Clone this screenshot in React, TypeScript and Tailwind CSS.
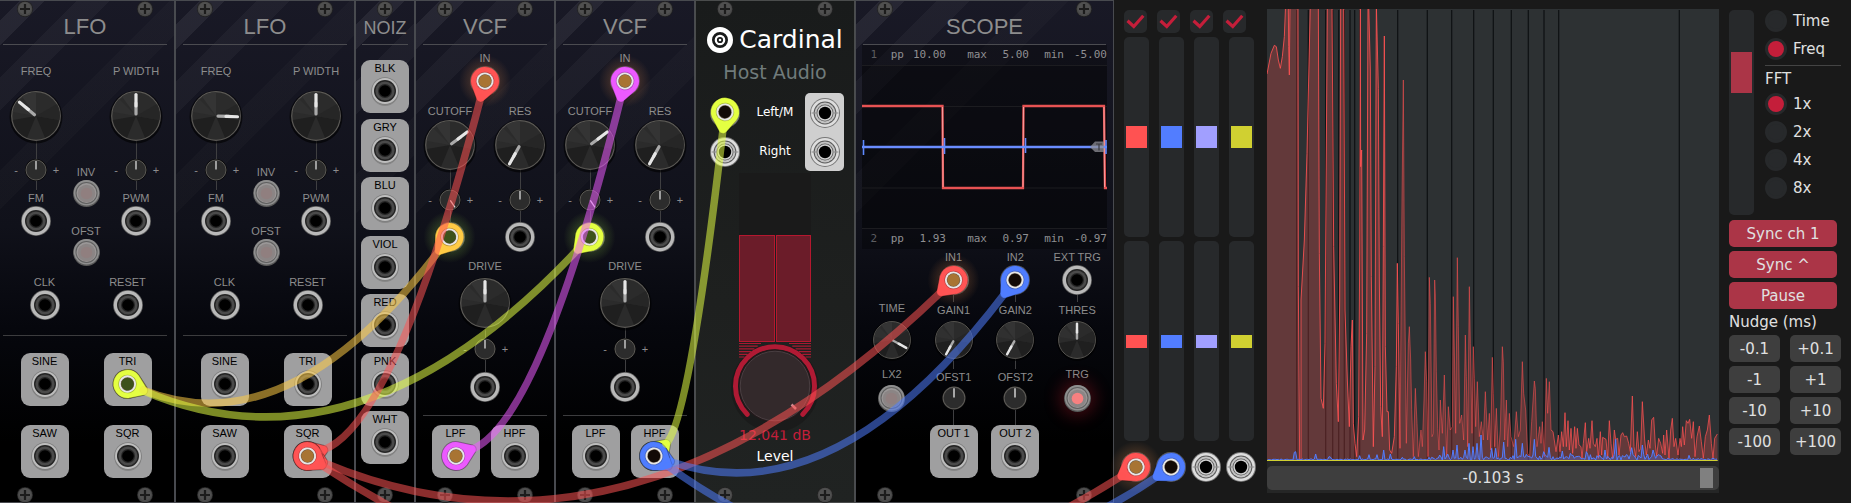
import React from "react";

const PANEL_FONT = "font-['Liberation_Sans',Arial,sans-serif]";
const UI_FONT = "font-['DejaVu_Sans',Verdana,sans-serif]";

function Screw() {
  return (
    <svg className="size-4 shrink-0" viewBox="0 0 16 16" aria-hidden="true">
      <circle cx="8" cy="8" r="8" fill="#222222" />
      <circle cx="8" cy="8" r="7.3" fill="#484848" />
      <circle cx="8" cy="7.4" r="6.2" fill="#505050" />
      <path d="M6.9 3h2.2v3.9H13v2.2H9.1V13H6.9V9.1H3V6.9h3.9z" fill="#1c1c1c" />
    </svg>
  );
}

function Screws({ single = false }: { single?: boolean }) {
  return (
    <div className={single ? "flex justify-center" : "flex justify-between px-[22px]"}>
      <Screw />
      {!single && <Screw />}
    </div>
  );
}

function Module({
  title,
  width,
  single = false,
  children,
}: {
  title: string;
  width: string;
  single?: boolean;
  children: React.ReactNode;
}) {
  return (
    <section
      className={`${PANEL_FONT} ${width} flex shrink-0 flex-col bg-[linear-gradient(135deg,transparent_18px,#ffffff10_18px,#ffffff10_36px,transparent_36px,transparent_58px,#ffffff09_58px,#ffffff09_82px,transparent_82px,transparent_124px,#ffffff05_124px,#ffffff05_152px,transparent_152px),linear-gradient(to_bottom,#191926,#10111a_45%,#06070d_65%,#000000_88%)] pt-px text-[#8d8d8d] shadow-[inset_0_0_0_1px_#484a4f]`}
    >
      <Screws single={single} />
      <h2
        className={
          single
            ? "text-center text-[18px] leading-[23px]"
            : "text-center text-[22px] leading-5"
        }
      >
        {title}
      </h2>
      <div className={single ? "mx-[7px] mt-1 h-px bg-[#4b4b50]" : "mx-2 mt-[7px] h-px bg-[#4b4b50]"} />
      {children}
      <div className="mt-auto pt-[9px]">
        <Screws single={single} />
      </div>
    </section>
  );
}

function Label({ children, dark = false }: { children: React.ReactNode; dark?: boolean }) {
  return (
    <span className={`text-[11px] leading-4 whitespace-nowrap ${dark ? "text-black" : ""}`}>{children}</span>
  );
}

function Port() {
  return (
    <svg className="block size-[30px] shrink-0" viewBox="0 0 30 30" aria-hidden="true">
      <circle cx="15" cy="15" r="15" fill="#5c5c5c" />
      <circle cx="15" cy="15" r="14.2" fill="#b9b9b9" />
      <circle cx="15" cy="15" r="11" fill="#242424" />
      <circle cx="15" cy="15" r="9.6" fill="#4a4a4a" />
      <circle cx="15" cy="15" r="7" fill="#262626" />
      <circle cx="15" cy="15" r="5.8" fill="#000000" />
    </svg>
  );
}

function OutPort() {
  return (
    <svg className="block size-[30px] shrink-0" viewBox="0 0 30 30" aria-hidden="true">
      <circle cx="15" cy="16.5" r="13.5" fill="#868686" />
      <circle cx="15" cy="15" r="13.8" fill="#7d7d7d" />
      <circle cx="15" cy="15" r="13" fill="#bdbdbd" />
      <circle cx="15" cy="15" r="11" fill="#242424" />
      <circle cx="15" cy="15" r="9.6" fill="#4a4a4a" />
      <circle cx="15" cy="15" r="7" fill="#262626" />
      <circle cx="15" cy="15" r="5.8" fill="#000000" />
    </svg>
  );
}

function SilverPort() {
  return (
    <svg className="block size-[30px] shrink-0" viewBox="0 0 30 30" aria-hidden="true">
      <circle cx="15" cy="15" r="15" fill="#777777" />
      <circle cx="15" cy="15" r="14" fill="#dedede" />
      <circle cx="15" cy="15" r="11.4" fill="#5a5a5a" />
      <circle cx="15" cy="15" r="10.4" fill="#c4c4c4" />
      <path d="M1.5 15H6M24 15h4.5" stroke="#8a8a8a" strokeWidth="1" />
      <circle cx="15" cy="15" r="8.5" fill="#555555" />
      <circle cx="15" cy="15" r="7.7" fill="#d0d0d0" />
      <circle cx="15" cy="15" r="6.2" fill="#000000" />
    </svg>
  );
}

function Output({ name }: { name: string }) {
  return (
    <div className="flex h-[53px] w-12 flex-col items-center rounded-[9px] bg-[#9f9fa0]">
      <Label dark>{name}</Label>
      <OutPort />
    </div>
  );
}

function Knob({ name, angle, size = "size-[50px]" }: { name: string; angle: number; size?: string }) {
  return (
    <label className={`relative block shrink-0 ${size}`}>
      <input
        type="range"
        aria-label={name}
        min={-180}
        max={180}
        defaultValue={angle}
        className="absolute inset-0 m-0 size-full opacity-0"
      />
      <svg className="block size-full overflow-visible" viewBox="0 0 50 50" aria-hidden="true">
        <circle cx="25" cy="26" r="26.5" fill="#000000" opacity="0.6" />
        <circle cx="25" cy="25" r="24.3" fill="#2b2b2b" stroke="#5b5955" strokeWidth="1.2" />
        <path d="M25 25L11 5.5A24 24 0 0 1 25 1.2z" fill="#343434" />
        <path d="M25 25L1.8 21A24 24 0 0 1 8 8z" fill="#303030" />
        <path d="M25 25L2 29A23.5 23.5 0 0 0 16 46.8z" fill="#1f1f1f" />
        <path d="M25 25L48 29A23.5 23.5 0 0 1 34 46.8z" fill="#1f1f1f" />
        <path d="M25 25L46 13A24 24 0 0 1 48.5 29z" fill="#262626" />
        <g transform={`rotate(${angle} 25 25)`}>
          <path d="M25 23V12" stroke="#a9a9a9" strokeWidth="3.2" strokeLinecap="round" />
          <path d="M25 15V3.5" stroke="#e6e6e6" strokeWidth="3.2" strokeLinecap="round" />
        </g>
      </svg>
    </label>
  );
}

function TrimKnob({ name, angle = 0, size = "size-[22px]" }: { name: string; angle?: number; size?: string }) {
  return (
    <label className={`relative block shrink-0 ${size}`}>
      <input
        type="range"
        aria-label={name}
        min={-180}
        max={180}
        defaultValue={angle}
        className="absolute inset-0 m-0 size-full opacity-0"
      />
      <svg className="block size-full" viewBox="0 0 22 22" aria-hidden="true">
        <circle cx="11" cy="11" r="11" fill="#0a0a0a" />
        <circle cx="11" cy="11" r="10" fill="#2c2c2c" stroke="#5b5955" strokeWidth="1" />
        <path d="M11 10.5V2" stroke="#dcdcdc" strokeWidth="1.3" transform={`rotate(${angle} 11 11)`} />
      </svg>
    </label>
  );
}

function Attenuverter({ name, angle = 0 }: { name: string; angle?: number }) {
  return (
    <div className="flex items-center text-[11px] leading-4">
      <span className="w-3.5 pr-1 text-center">-</span>
      <TrimKnob name={name} angle={angle} />
      <span className="w-3.5 pl-1 text-center">+</span>
    </div>
  );
}

function Stem({ height }: { height: string }) {
  return <div className={`w-px bg-[#3f3f41] ${height}`} />;
}

function LedButton({ name, lit = false }: { name: string; lit?: boolean }) {
  return (
    <button
      type="button"
      aria-label={name}
      className={`block size-[27px] shrink-0 rounded-full ${lit ? "shadow-[0_0_16px_5px_#c0182850]" : ""}`}
    >
      <svg className="block size-full" viewBox="0 0 27 27" aria-hidden="true">
        <circle cx="13.5" cy="13.5" r="13.5" fill="#5a5a5a" />
        <circle cx="13.5" cy="12.8" r="12.7" fill="#8f8f8f" />
        <circle cx="13.5" cy="13" r="11" fill="#5f5f5f" />
        <circle cx="13.5" cy="13" r="10" fill="#9a9797" />
        <circle cx="13.5" cy="13.5" r="8.8" fill="#8b8585" />
        <circle cx="13.5" cy="13.5" r="5.8" fill={lit ? "#f78080" : "#907f7f"} />
      </svg>
    </button>
  );
}

function Lfo({ rate }: { rate: number }) {
  return (
    <Module title="LFO" width="w-[180px]">
      <div className="flex items-start pt-[18px] pl-4">
        <div className="flex w-[50px] flex-col items-center">
          <Label>FREQ</Label>
          <div className="mt-3">
            <Knob name="FREQ" angle={rate} />
          </div>
          <Stem height="h-[18px]" />
          <Attenuverter name="FM amount" />
          <Stem height="h-[9px]" />
          <Label>FM</Label>
          <Port />
        </div>
        <div className="mt-[101px] flex w-[50px] flex-col items-center">
          <Label>INV</Label>
          <LedButton name="INV" />
          <div className="mt-4 flex flex-col items-center">
            <Label>OFST</Label>
            <LedButton name="OFST" />
          </div>
        </div>
        <div className="flex w-[50px] flex-col items-center">
          <Label>P WIDTH</Label>
          <div className="mt-3">
            <Knob name="P WIDTH" angle={0} />
          </div>
          <Stem height="h-[18px]" />
          <Attenuverter name="PWM amount" />
          <Stem height="h-[9px]" />
          <Label>PWM</Label>
          <Port />
        </div>
      </div>
      <div className="mt-2 grid grid-cols-2 pr-1.5 pl-2">
        {["CLK", "RESET"].map((n) => (
          <div key={n} className="flex flex-col items-center">
            <Label>{n}</Label>
            <Port />
          </div>
        ))}
      </div>
      <div className="mx-2 mt-[15px] h-px bg-[#3c3c3e]" />
      <div className="mt-[17px] grid grid-cols-2 justify-items-center gap-y-[19px] pr-1.5 pl-2">
        <Output name="SINE" />
        <Output name="TRI" />
        <Output name="SAW" />
        <Output name="SQR" />
      </div>
    </Module>
  );
}

function Noiz() {
  return (
    <Module title="NOIZ" width="w-[60px]" single>
      <div className="mt-[15px] mb-[14px] flex flex-1 flex-col items-center justify-between">
        {["BLK", "GRY", "BLU", "VIOL", "RED", "PNK", "WHT"].map((n) => (
          <Output key={n} name={n} />
        ))}
      </div>
    </Module>
  );
}

function Vcf() {
  return (
    <Module title="VCF" width="w-[140px]">
      <div className="mt-[5px] flex flex-col items-center">
        <Label>IN</Label>
        <Port />
      </div>
      <div className="mt-[7px] grid grid-cols-2">
        {[
          { name: "CUTOFF", angle: 53, trim: 146 },
          { name: "RES", angle: -151, trim: 0 },
        ].map((k) => (
          <div key={k.name} className="flex flex-col items-center">
            <Label>{k.name}</Label>
            <div className="mt-px">
              <Knob name={k.name} angle={k.angle} />
            </div>
            <Stem height="h-[19px]" />
            <Attenuverter name={`${k.name} amount`} angle={k.trim} />
            <Stem height="h-[11px]" />
            <Port />
          </div>
        ))}
      </div>
      <div className="mt-1.5 flex flex-col items-center">
        <Label>DRIVE</Label>
        <div className="mt-1">
          <Knob name="DRIVE" angle={0} />
        </div>
        <Stem height="h-2.5" />
        <Attenuverter name="DRIVE amount" />
        <Stem height="h-3" />
        <Port />
      </div>
      <div className="mx-2 mt-[13px] h-px bg-[#3c3c3e]" />
      <div className="mt-[9px] flex justify-center gap-[11px]">
        <Output name="LPF" />
        <Output name="HPF" />
      </div>
    </Module>
  );
}

function LevelKnob() {
  const stripes = [0, 1, 2, 3, 4, 5].map((i) => ({ y: 1.5 + i * 2.7, inset: 22 - i * 3.3 }));
  return (
    <label className="relative mx-auto block h-20 w-[86px]">
      <input type="range" aria-label="Level" defaultValue={90} className="absolute inset-0 m-0 size-full opacity-0" />
      <svg className="block size-full overflow-visible" viewBox="0 0 86 80" aria-hidden="true">
        <circle cx="43" cy="46" r="44" fill="#100c0d" opacity="0.3" />
        {stripes.map((s) => (
          <path
            key={s.y}
            d={`M7 ${s.y}H${7 + s.inset}M${79 - s.inset} ${s.y}H79`}
            stroke="#a81a31"
            strokeWidth="1.2"
          />
        ))}
        <path
          d="M15.2 72.3A39.5 39.5 0 1 1 70.8 72.3"
          fill="none"
          stroke="#b01a34"
          strokeWidth="5"
          strokeLinecap="round"
        />
        <circle cx="43" cy="44" r="36.5" fill="#241a1c" />
        <circle cx="43" cy="44" r="34.8" fill="#33292b" stroke="#4a3f42" strokeWidth="1" />
        <path d="M59.5 62.5L64 67" stroke="#d08a90" strokeWidth="2.5" />
      </svg>
    </label>
  );
}

function HostAudio() {
  return (
    <section
      className={`${UI_FONT} flex w-[160px] shrink-0 flex-col bg-[linear-gradient(to_bottom,#191b1b,#1e201f_60%,#202322)] pt-px text-white shadow-[inset_0_0_0_1px_#4a4c4c]`}
    >
      <Screws />
      <h2 className="mt-[10px] flex h-[26px] items-center justify-center gap-1.5 text-[25px]">
        <svg className="size-[26px] shrink-0" viewBox="0 0 26 26" aria-hidden="true">
          <circle cx="13" cy="13" r="10.5" fill="none" stroke="#ffffff" strokeWidth="5" />
          <circle cx="13" cy="13" r="4.2" fill="none" stroke="#ffffff" strokeWidth="2.2" />
          <circle cx="13" cy="13" r="1.3" fill="#ffffff" />
        </svg>
        Cardinal
      </h2>
      <p className="mt-[7px] text-center text-[19px] leading-6 whitespace-nowrap text-[#707b7b]">Host Audio</p>
      <div className="mt-[9px] flex pr-[11px] pl-2.5 text-[12px]">
        <div className="flex w-10 flex-col items-center">
          <div className="flex h-[39px] items-center">
            <SilverPort />
          </div>
          <div className="flex h-[39px] items-center">
            <SilverPort />
          </div>
        </div>
        <div className="flex-1 text-center">
          <div className="leading-[39px]">Left/M</div>
          <div className="leading-[39px]">Right</div>
        </div>
        <div className="flex w-[39px] flex-col items-center rounded-[5px] bg-[#cfcfcf]">
          <div className="flex h-[39px] items-center">
            <SilverPort />
          </div>
          <div className="flex h-[39px] items-center">
            <SilverPort />
          </div>
        </div>
      </div>
      <div className="mx-auto mt-0.5 w-[72px]">
        <div className="h-[62px] bg-[#1a1a1a]" />
        <div className="flex h-[107px] gap-px">
          <div className="flex-1 border border-[#b5182f] bg-[#6b1c29]" />
          <div className="flex-1 border border-[#b5182f] bg-[#6b1c29]" />
        </div>
      </div>
      <LevelKnob />
      <p className="mt-[3px] text-center text-[14px] leading-5 text-[#c41e3a]">12.041 dB</p>
      <p className="mt-px text-center text-[14px] leading-5">Level</p>
      <div className="mt-auto">
        <Screws />
      </div>
    </section>
  );
}

function Readout({ channel, pp, max, min }: { channel: string; pp: string; max: string; min: string }) {
  return (
    <div className="grid h-5 grid-cols-[15px_27px_42px_41px_42px_35px_1fr] bg-black/30 text-right font-['DejaVu_Sans_Mono','Liberation_Mono',monospace] text-[11px] leading-5 text-[#8f8f92]">
      <span className="text-[#5c5c60]">{channel}</span>
      <span>pp</span>
      <span>{pp}</span>
      <span>max</span>
      <span>{max}</span>
      <span>min</span>
      <span>{min}</span>
    </div>
  );
}

function ScopeDisplay() {
  return (
    <div className="mx-[7px]">
      <Readout channel="1" pp="10.00" max="5.00" min="-5.00" />
      <svg
        className="block h-[164px] w-full bg-black/45"
        viewBox="0 0 245 164"
        preserveAspectRatio="none"
        aria-hidden="true"
      >
        <path d="M0 .5H245M0 41.5H245M0 123H245M0 163.5H245" stroke="#1c1c20" strokeWidth="1" />
        <path
          d="M0 41H80.5L81 123H161L161.5 41H242L243 123H245"
          fill="none"
          stroke="#ff5a5a"
          strokeWidth="2.3"
          opacity="0.9"
        />
        <path d="M80.5 42L81 122M161 122L161.5 42M242 42L242.5 122" stroke="#ffb0b0" strokeWidth=".8" />
        <path d="M0 82H245" stroke="#6a8dff" strokeWidth="2.6" />
        <path d="M1.5 75V90M82.5 73V89M163.5 73V88M244 75V89" stroke="#5f8aff" strokeWidth="1.6" />
        <path d="M228 82L233 76.5H242V87H233z" fill="#8f8f95" opacity="0.75" />
        <path d="M234 79H240M237 79V85.5" stroke="#3a3a40" strokeWidth="1.2" />
      </svg>
      <Readout channel="2" pp="1.93" max="0.97" min="-0.97" />
    </div>
  );
}

function ScopeChannel({ n }: { n: number }) {
  return (
    <div className="flex flex-col items-center">
      <Label>{`IN${n}`}</Label>
      <Port />
      <Stem height="h-[7px]" />
      <Label>{`GAIN${n}`}</Label>
      <div className="mt-[3px]">
        <Knob name={`GAIN${n}`} angle={-151} size="size-[38px]" />
      </div>
      <Stem height="h-2.5" />
      <Label>{`OFST${n}`}</Label>
      <div className="mt-px">
        <TrimKnob name={`OFST${n}`} size="size-6" />
      </div>
      <Stem height="h-[15px]" />
      <Output name={`OUT ${n}`} />
    </div>
  );
}

function Scope() {
  return (
    <Module title="SCOPE" width="w-[259px]">
      <ScopeDisplay />
      <div className="grid grid-cols-4 px-1.5">
        <div className="flex flex-col items-center pt-[51px]">
          <Label>TIME</Label>
          <div className="mt-[5px] mb-[7px]">
            <Knob name="TIME" angle={119} size="size-[38px]" />
          </div>
          <Label>LX2</Label>
          <div className="mt-[3px]">
            <LedButton name="LX2" />
          </div>
        </div>
        <ScopeChannel n={1} />
        <ScopeChannel n={2} />
        <div className="flex flex-col items-center">
          <Label>EXT TRG</Label>
          <Port />
          <Stem height="h-[7px]" />
          <Label>THRES</Label>
          <div className="mt-[3px] mb-[7px]">
            <Knob name="THRES" angle={0} size="size-[38px]" />
          </div>
          <Label>TRG</Label>
          <div className="mt-[3px]">
            <LedButton name="TRG" lit />
          </div>
        </div>
      </div>
    </Module>
  );
}

type Point = [number, number];
type Cable = { from: Point; to: Point; color: string; fromHole: string; toHole: string };

const HOT = "#a87433";
const GREEN = "#3d521b";
const DARK = "#120a06";

const CABLES: Cable[] = [
  { from: [127.5, 384], to: [449.5, 237], color: "#ffcb45", fromHole: GREEN, toHole: GREEN },
  { from: [127.5, 384], to: [589.5, 237], color: "#e4ff42", fromHole: GREEN, toHole: GREEN },
  { from: [307.5, 456], to: [485, 81], color: "#ff5454", fromHole: HOT, toHole: HOT },
  { from: [307.5, 456], to: [953.5, 280], color: "#ff5454", fromHole: HOT, toHole: HOT },
  { from: [307.5, 456], to: [1136, 467], color: "#ff5454", fromHole: HOT, toHole: HOT },
  { from: [456, 456], to: [625, 81], color: "#ec5aff", fromHole: HOT, toHole: HOT },
  { from: [654, 456], to: [725, 112], color: "#e4ff42", fromHole: DARK, toHole: DARK },
  { from: [654, 456], to: [1015, 280], color: "#4f7dff", fromHole: DARK, toHole: DARK },
  { from: [654, 456], to: [1171, 467], color: "#4f7dff", fromHole: DARK, toHole: DARK },
];

const GLOWS: Array<{ at: Point; fill: string }> = [
  { at: [449.5, 237], fill: "url(#green)" },
  { at: [589.5, 237], fill: "url(#green)" },
  { at: [485, 81], fill: "url(#hot)" },
  { at: [625, 81], fill: "url(#hot)" },
  { at: [953.5, 280], fill: "url(#hot)" },
  { at: [1136, 467], fill: "url(#hot)" },
];

function toward([x, y]: Point, [cx, cy]: Point, by: number): Point {
  const d = Math.hypot(cx - x, cy - y);
  return [x + ((cx - x) / d) * by, y + ((cy - y) / d) * by];
}

function control({ from, to }: Cable): Point {
  const d = Math.hypot(to[0] - from[0], to[1] - from[1]);
  return [(from[0] + to[0]) / 2, (from[1] + to[1]) / 2 + 0.272 * (150 + d)];
}

function Plug({ at, aim, color, hole }: { at: Point; aim: Point; color: string; hole: string }) {
  const turn = (Math.atan2(aim[1] - at[1], aim[0] - at[0]) * 180) / Math.PI;
  return (
    <g transform={`translate(${at[0]} ${at[1]}) rotate(${turn})`}>
      <path
        d="M7 -12.6L19.5 -3.8A4.6 4.6 0 0 1 19.5 3.8L7 12.6A14.4 14.4 0 1 1 7 -12.6z"
        fill={color}
        stroke="#00000055"
        strokeWidth="1"
      />
      <circle r="9.3" fill="#00000040" />
      <circle r="8.6" fill="#e6e6e6" />
      <circle r="6.7" fill="#6a5a48" />
      <circle r="6.2" fill={hole} />
    </g>
  );
}

function Cables() {
  return (
    <svg
      className="pointer-events-none absolute top-0 left-0 h-[503px] w-[1200px]"
      viewBox="0 0 1200 503"
      aria-hidden="true"
    >
      <defs>
        <radialGradient id="hot">
          <stop offset="0.5" stopColor="#ff9a50" stopOpacity="0.18" />
          <stop offset="1" stopColor="#ff9a50" stopOpacity="0" />
        </radialGradient>
        <radialGradient id="green">
          <stop offset="0.5" stopColor="#b0ff50" stopOpacity="0.18" />
          <stop offset="1" stopColor="#b0ff50" stopOpacity="0" />
        </radialGradient>
      </defs>
      {GLOWS.map((g) => (
        <circle key={g.at[0]} cx={g.at[0]} cy={g.at[1]} r="26" fill={g.fill} />
      ))}
      {CABLES.map((c, i) => (
        <g key={i}>
          <Plug at={c.from} aim={control(c)} color={c.color} hole={c.fromHole} />
          <Plug at={c.to} aim={control(c)} color={c.color} hole={c.toHole} />
        </g>
      ))}
      {CABLES.map((c, i) => {
        const q = control(c);
        const a = toward(c.from, q, 17);
        const b = toward(c.to, q, 17);
        return (
          <path
            key={i}
            d={`M${a[0]} ${a[1]}Q${q[0]} ${q[1]} ${b[0]} ${b[1]}`}
            fill="none"
            stroke={c.color}
            strokeWidth="7.5"
            strokeLinecap="round"
            opacity="0.54"
          />
        );
      })}
    </svg>
  );
}

const CHANNELS = [
  { name: "Channel 1", thumb: "[&::-webkit-slider-thumb]:bg-[#ff5252]" },
  { name: "Channel 2", thumb: "[&::-webkit-slider-thumb]:bg-[#527dff]" },
  { name: "Channel 3", thumb: "[&::-webkit-slider-thumb]:bg-[#a19fff]" },
  { name: "Channel 4", thumb: "[&::-webkit-slider-thumb]:bg-[#d0d031]" },
];

const FADER =
  "m-0 block w-[25px] appearance-none rounded-[5px] bg-[#27292b] p-0.5 [writing-mode:vertical-lr] [&::-webkit-slider-thumb]:appearance-none [&::-webkit-slider-thumb]:w-[21px]";

function Mixer() {
  return (
    <div className="w-[143px] shrink-0 pt-px">
      <div className="flex gap-2.5">
        {CHANNELS.map((c) => (
          <label key={c.name} className="relative block size-[23px]">
            <input
              type="checkbox"
              aria-label={`${c.name} enabled`}
              defaultChecked
              className="block size-full appearance-none rounded-[5px] bg-[#27292b]"
            />
            <svg className="pointer-events-none absolute inset-0 size-full" viewBox="0 0 23 23" aria-hidden="true">
              <path d="M3.5 10.8L9.8 16.5L19.3 5.8" fill="none" stroke="#c41e3a" strokeWidth="3.2" />
            </svg>
          </label>
        ))}
      </div>
      <div className="mt-1 flex gap-2.5">
        {CHANNELS.map((c) => (
          <input
            key={c.name}
            type="range"
            aria-label={`${c.name} scale`}
            className={`${FADER} h-[200px] [&::-webkit-slider-thumb]:h-[22px] ${c.thumb}`}
          />
        ))}
      </div>
      <div className="mt-1 flex gap-2.5">
        {CHANNELS.map((c) => (
          <input
            key={c.name}
            type="range"
            aria-label={`${c.name} offset`}
            className={`${FADER} h-[200px] [&::-webkit-slider-thumb]:h-[13px] ${c.thumb}`}
          />
        ))}
      </div>
      <div className="mt-[11px] -ml-[3px] flex gap-[5px]">
        {CHANNELS.map((c) => (
          <SilverPort key={c.name} />
        ))}
      </div>
    </div>
  );
}

const DIVISIONS = [95, 130, 182, 203, 221, 238, 255, 269, 284, 398, 487, 560, 626, 685, 739, 790, 837, 881, 1243];

const RED_LOW =
  "6,222 18,160 28,136 34,140 40,180 46,205 52,170 58,110 62,10 70,10 71,140 73,225 75,10 99,10 100,860 104,1383 108,1383 108,900 118,720 126,460 136,10 160,10 163,760 168,1195 175,1225 180,1030 187,10 201,10 206,740 214,1150 220,1265 224,900 227,10 236,10 240,930 247,1140 253,1280 258,1040 262,960 265,1270 270,1330 275,1370 281,1250 284,780 286,10 287,500 290,450 294,1320 299,1290 305,1000 309,10 311,10 316,210 319,830 325,1340 330,1100 334,10 340,265 343,840 347,1220 352,1310 355,740 358,108 361,1040 366,1235 370,1235 374,1350 380,1360 388,1310 394,1100 397,790 400,970 405,1345";

const RED_MID =
  "405,1345 411,600 415,240 418,770 424,1330 430,1030 433,980 437,1080 440,1228 445,1370 451,1165 456,1270 460,1370 468,1290 472,1340 477,1200 481,1055 485,1145 489,1370 493,832 496,910 501,1310 505,1300 509,840 511,885 514,1115 518,1285 522,1350 526,1200 532,1300 538,1125 545,1370 550,1220 556,1290 562,1280 565,890 568,1050 572,1300 577,773 580,980 584,1270 590,1245 596,1320 601,1005 604,1130 608,1340 613,860 616,1030 621,1300 625,1040 628,1135 632,1280 637,1145 643,1310 649,1265 655,1320 661,1175 668,1320 673,1240 677,1350 682,1072 685,1180 689,1340 694,1225 700,1370 706,1290 712,1040 715,1085 719,1320 724,1200 728,1340 733,1240 738,1310 746,1340 750,1290 754,1235 760,1310 766,1290 772,1085 776,1180 782,1230 788,1360 794,1370 800,1265 808,1143 811,1165 816,1340 824,1280 828,1330 832,1265 838,1370 844,1135 848,1240 853,1145 858,1290";

const RED_HIGH =
  "864,1295 873,1355 880,1305 885,1355 890,1295 895,1340 900,1238 904,1340 909,1262 913,1350 918,1285 923,1360 929,1280 933,1345 937,1285 942,1335 948,1340 951,1375 955,1330 961,1268 965,1355 971,1315 975,1345 981,1262 985,1330 991,1340 996,1315 1000,1375 1006,1295 1010,1365 1013,1312 1023,1318 1028,1375 1033,1262 1038,1330 1043,1375 1048,1290 1052,1318 1058,1315 1062,1365 1068,1305 1073,1298 1078,1310 1085,1308 1091,1330 1096,1355 1102,1188 1107,1340 1112,1370 1117,1295 1122,1355 1127,1345 1132,1205 1139,1320 1144,1365 1150,1320 1155,1345 1160,1260 1166,1252 1171,1335 1175,1368 1181,1315 1187,1330 1193,1360 1196,1305 1200,1365 1205,1290 1212,1375 1217,1290 1222,1255 1227,1340 1232,1315 1239,1365 1245,1315 1249,1340 1253,1280 1258,1335 1264,1262 1269,1270 1274,1258 1280,1315 1285,1265 1290,1370 1296,1310 1303,1278 1309,1325 1315,1375 1321,1310 1327,1290 1333,1245 1339,1330 1344,1375 1349,1315 1357,1302";

const BLUE_PEAKS: Record<number, number> = {
  88: 1357, 92: 1355, 152: 1362, 192: 1370, 196: 1371, 284: 1367, 312: 1364, 336: 1364, 356: 1350, 376: 1362, 412: 1372,
  448: 1370, 492: 1372, 524: 1365, 536: 1340, 548: 1362, 564: 1350, 576: 1335, 600: 1350, 612: 1330, 624: 1340,
  636: 1330, 648: 1305, 680: 1345, 692: 1345, 716: 1326, 752: 1318, 772: 1330, 808: 1318, 836: 1355, 852: 1342,
  892: 1353, 916: 1360, 964: 1355, 1020: 1350, 1052: 1318, 1100: 1343, 1132: 1335, 1164: 1350, 1272: 1366,
};

function jitter(n: number) {
  const v = Math.sin(n * 12.9898) * 43758.5453;
  return v - Math.floor(v);
}

function blueLine() {
  const out: string[] = [];
  for (let x = 8; x <= 1356; x += 4) {
    const amount = x < 500 ? 3 : x > 1190 ? 5 : x > 740 ? 17 : 9;
    const y = BLUE_PEAKS[x] ?? 1380 - jitter(x + 7) * amount;
    out.push(`${x},${y.toFixed(0)}`);
  }
  return out.join(" ");
}

function Spectrum() {
  const blue = blueLine();
  return (
    <svg className="block h-[452px] w-full" viewBox="6 27 1356 1356" preserveAspectRatio="none" aria-hidden="true">
      <rect x="6" y="27" width="1356" height="1356" fill="#2d3133" />
      {DIVISIONS.map((x) => (
        <path key={x} d={`M${x} 30V1383`} stroke="#101315" strokeWidth="4" />
      ))}
      <polygon points={`6,1383 ${RED_LOW} ${RED_MID} ${RED_HIGH} 1358,1383`} fill="#ff5050" fillOpacity="0.26" />
      <polyline points={RED_LOW} fill="none" stroke="#ff5252" strokeWidth="3" strokeOpacity="0.85" />
      <polyline points={RED_MID} fill="none" stroke="#ff5252" strokeWidth="2" strokeOpacity="0.8" />
      <polyline points={`858,1290 ${RED_HIGH}`} fill="none" stroke="#ff5252" strokeWidth="2.6" strokeOpacity="0.85" />
      <polygon points={`8,1383 ${blue} 1358,1383`} fill="#527dff" fillOpacity="0.3" />
      <polyline points={blue} fill="none" stroke="#527dff" strokeWidth="3" />
      <path d="M6 1381.5H1358" stroke="#d0d031" strokeWidth="3" />
    </svg>
  );
}

function Choice({ group, label, checked = false }: { group: string; label: string; checked?: boolean }) {
  return (
    <label className="flex h-[22px] items-center gap-1.5">
      <input
        type="radio"
        name={group}
        defaultChecked={checked}
        className="block size-[22px] appearance-none rounded-full border-[3px] border-[#27292b] bg-[#27292b] checked:bg-[#c41e3a]"
      />
      {label}
    </label>
  );
}

function Controls() {
  return (
    <div className="w-28 shrink-0 pt-px">
      <div className="flex gap-[11px]">
        <input
          type="range"
          aria-label="Time base"
          defaultValue={25}
          className={`${FADER} h-[205px] [&::-webkit-slider-thumb]:h-[41px] [&::-webkit-slider-thumb]:bg-[#ab3547]`}
        />
        <div className="flex-1">
          <div className="flex flex-col gap-1.5">
            <Choice group="domain" label="Time" />
            <Choice group="domain" label="Freq" checked />
          </div>
          <div className="mt-[5px] h-px bg-[#444444]" />
          <p className="mt-[3px] leading-5">FFT</p>
          <div className="mt-1 flex flex-col gap-1.5">
            <Choice group="fft" label="1x" checked />
            <Choice group="fft" label="2x" />
            <Choice group="fft" label="4x" />
            <Choice group="fft" label="8x" />
          </div>
        </div>
      </div>
      <div className="mt-[5px] flex flex-col gap-1 pr-1">
        {["Sync ch 1", "Sync ^", "Pause"].map((t) => (
          <button key={t} type="button" className="h-[27px] rounded-[5px] bg-[#ab3547] leading-5">
            {t}
          </button>
        ))}
      </div>
      <p className="mt-[3px] leading-5 whitespace-nowrap">Nudge (ms)</p>
      <div className="mt-[3px] grid grid-cols-2 gap-x-2.5 gap-y-1">
        {["-0.1", "+0.1", "-1", "+1", "-10", "+10", "-100", "+100"].map((t) => (
          <button key={t} type="button" className="h-[27px] rounded-[5px] bg-[#3e3e3e] leading-5">
            {t}
          </button>
        ))}
      </div>
    </div>
  );
}

function Analyzer() {
  return (
    <section className={`${UI_FONT} flex min-w-[560px] flex-1 bg-[#191919] px-2.5 pt-[9px] text-[15px] text-[#e0e0e0]`}>
      <Mixer />
      <div className="mr-2.5 mb-2.5 min-w-0 flex-1 self-start bg-[#252626] pb-[3px]">
        <Spectrum />
        <div className="relative mt-[5px]">
          <input
            type="range"
            aria-label="Trigger offset"
            defaultValue={99}
            className="m-0 block h-6 w-full appearance-none rounded-[5px] bg-[#3e3e3e] px-0.5 [&::-webkit-slider-thumb]:h-5 [&::-webkit-slider-thumb]:w-[13px] [&::-webkit-slider-thumb]:appearance-none [&::-webkit-slider-thumb]:bg-[#808080]"
          />
          <output className="pointer-events-none absolute inset-0 text-center leading-6">-0.103 s</output>
        </div>
      </div>
      <Controls />
    </section>
  );
}

export default function App() {
  return (
    <main className="relative flex overflow-hidden bg-[#191919]">
      <div className="-ml-[5px] flex shrink-0">
        <Lfo rate={-50} />
        <Lfo rate={92} />
        <Noiz />
        <Vcf />
        <Vcf />
        <HostAudio />
        <Scope />
      </div>
      <Analyzer />
      <Cables />
    </main>
  );
}
